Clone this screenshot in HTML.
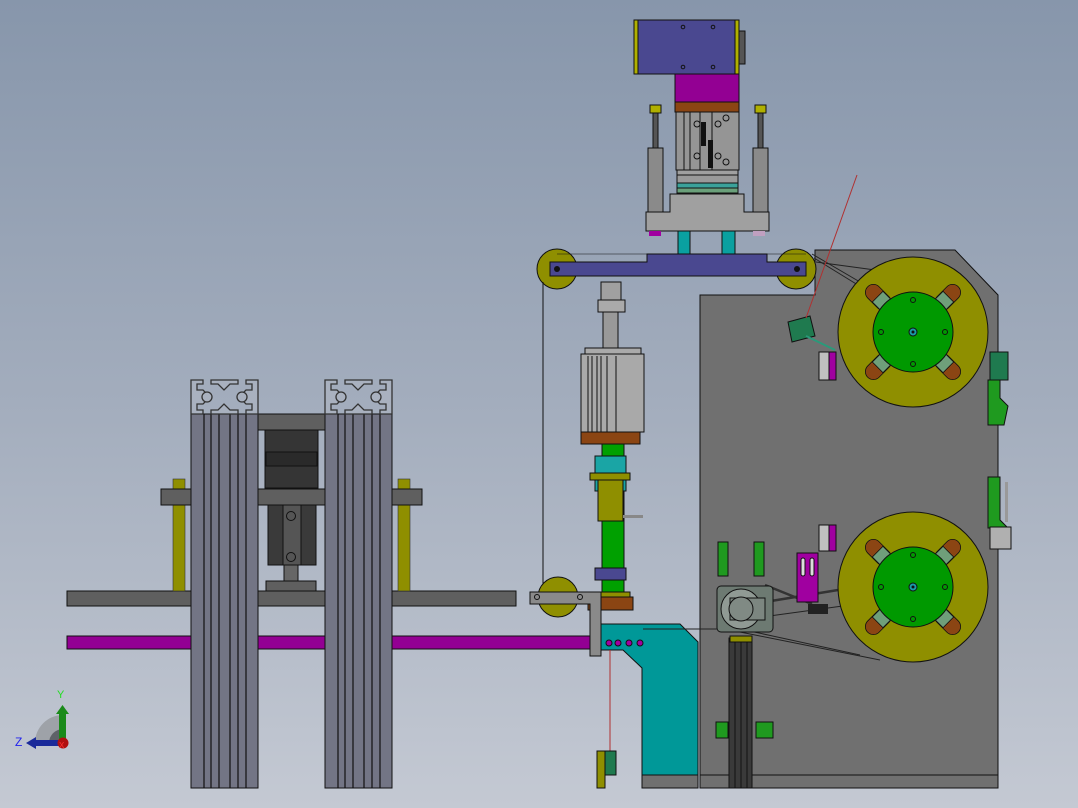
<!DOCTYPE html>
<html><head><meta charset="utf-8"><style>
html,body{margin:0;padding:0;width:1078px;height:808px;overflow:hidden}
svg{display:block}
</style></head><body>
<svg width="1078" height="808" viewBox="0 0 1078 808" xmlns="http://www.w3.org/2000/svg" font-family="Liberation Sans, sans-serif">
<defs>
<linearGradient id="bg" x1="0" y1="0" x2="0" y2="1">
<stop offset="0" stop-color="#8796ab"/><stop offset="0.5" stop-color="#a3adbd"/><stop offset="1" stop-color="#c4c9d3"/>
</linearGradient>
<g id="slot"><rect x="-64" y="-8" width="30" height="16" rx="8" fill="#8b4513"/><rect x="-50" y="-7.5" width="13" height="15" fill="#6f9f7a"/></g>
<g id="reel">
<circle r="75" fill="#8f8f00" stroke="#111" stroke-width="1"/>
<g stroke="#111" stroke-width="0.8">
<use href="#slot" transform="rotate(45)"/><use href="#slot" transform="rotate(135)"/><use href="#slot" transform="rotate(225)"/><use href="#slot" transform="rotate(315)"/>
</g>
<circle r="40" fill="#009900" stroke="#111"/>
<circle r="4" fill="#1a9aa8" stroke="#111"/><circle r="1.5" fill="#111"/>
<circle cx="0" cy="-32" r="2.5" fill="none" stroke="#111"/><circle cx="0" cy="32" r="2.5" fill="none" stroke="#111"/>
<circle cx="-32" cy="0" r="2.5" fill="none" stroke="#111"/><circle cx="32" cy="0" r="2.5" fill="none" stroke="#111"/>
</g>
<g id="prof">
<rect x="0" y="34" width="67" height="374" fill="#737585" stroke="#111"/>
<g stroke="#111" stroke-width="1.2">
<line x1="13" y1="34" x2="13" y2="408"/><line x1="20" y1="34" x2="20" y2="408"/><line x1="28" y1="34" x2="28" y2="408"/>
<line x1="39" y1="34" x2="39" y2="408"/><line x1="47" y1="34" x2="47" y2="408"/><line x1="55" y1="34" x2="55" y2="408"/>
</g>
<g fill="#a9b1bf" stroke="#333" stroke-width="1.3">
<path d="M0 0h12v4h-6v6h6l4 4v6l-4 4h-6v6h6v4H0z"/>
<path d="M67 0h-12v4h6v6h-6l-4 4v6l4 4h6v6h-6v4h12z"/>
<path d="M20 0h27v4h-8l-6 6-6-6h-7z"/>
<path d="M20 34h27v-4h-8l-6-6-6 6h-7z"/>
<circle cx="16" cy="17" r="5"/><circle cx="51" cy="17" r="5"/>
</g>
</g>
</defs>
<rect width="1078" height="808" fill="url(#bg)"/>

<!-- LEFT STRUCTURE -->
<rect x="67" y="591" width="449" height="15" fill="#5f5f5f" stroke="#111"/>
<rect x="67" y="636" width="525" height="13" fill="#930093" stroke="#111"/>
<rect x="173" y="479" width="12" height="112" fill="#8f8f00" stroke="#333" stroke-width=".6"/>
<rect x="398" y="479" width="12" height="112" fill="#8f8f00" stroke="#333" stroke-width=".6"/>
<rect x="161" y="489" width="261" height="16" fill="#5f5f5f" stroke="#111"/>
<rect x="258" y="414" width="67" height="16" fill="#5f5f5f" stroke="#111"/>
<rect x="265" y="430" width="53" height="58" fill="#353535" stroke="#111"/>
<rect x="266" y="452" width="51" height="14" fill="#2a2a2a" stroke="#111"/>
<rect x="268" y="505" width="48" height="60" fill="#3a3a3a" stroke="#111"/>
<rect x="283" y="505" width="18" height="60" fill="#555" stroke="#111"/>
<circle cx="291" cy="516" r="4.5" fill="none" stroke="#111"/><circle cx="291" cy="557" r="4.5" fill="none" stroke="#111"/>
<rect x="284" y="565" width="14" height="18" fill="#666" stroke="#111"/>
<rect x="266" y="581" width="50" height="10" fill="#5f5f5f" stroke="#111"/>
<g transform="translate(191,380)"><use href="#prof"/></g>
<g transform="translate(325,380)"><use href="#prof"/></g>

<!-- axis -->
<path d="M63 743 L35 743 A28 28 0 0 1 63 715 Z" fill="#9ea2a8"/>
<path d="M63 743 L49 743 A14 14 0 0 1 63 729 Z" fill="#5e6268"/>
<rect x="59" y="712" width="7" height="31" fill="#1a8a1a"/><path d="M56 714 L62.5 705 L69 714 Z" fill="#1a8a1a"/>
<rect x="35" y="740" width="28" height="6" fill="#1a2a9a"/><path d="M36 737 L26 743 L36 749 Z" fill="#1a2a9a"/>
<circle cx="63" cy="743" r="5.5" fill="#b01010"/>
<text x="57" y="698" font-size="11" fill="#22dd22">Y</text>
<text x="15" y="746" font-size="12" fill="#2222ee">Z</text>
<text x="59" y="748" font-size="8" fill="#ff3333">X</text>

<!-- BIG PANEL -->
<path d="M700 295 L700 788 L998 788 L998 295 L955 250 L815 250 L815 295 Z" fill="#707070" stroke="#111"/>
<line x1="700" y1="775" x2="998" y2="775" stroke="#111"/>
<g stroke="#222" stroke-width="1">
<line x1="812" y1="254" x2="860" y2="282"/><line x1="814" y1="258" x2="866" y2="290"/><line x1="816" y1="262" x2="890" y2="272"/>
<line x1="740" y1="620" x2="850" y2="605"/><line x1="745" y1="630" x2="860" y2="655"/><line x1="740" y1="632" x2="880" y2="660"/>
</g>
<g stroke="#333" stroke-width="2.5"><line x1="765" y1="602" x2="838" y2="590"/><line x1="765" y1="585" x2="812" y2="604"/></g>
<use href="#reel" x="913" y="332"/>
<use href="#reel" x="913" y="587"/>
<rect x="819" y="352" width="10" height="28" fill="#c0c0c0" stroke="#111"/><rect x="829" y="352" width="7" height="28" fill="#a000a0" stroke="#111"/>
<rect x="819" y="525" width="10" height="26" fill="#c0c0c0" stroke="#111"/><rect x="829" y="525" width="7" height="26" fill="#a000a0" stroke="#111"/>
<rect x="797" y="553" width="21" height="49" fill="#a000a0" stroke="#111"/>
<rect x="801" y="558" width="4" height="18" rx="2" fill="#ddd" stroke="#111"/><rect x="810" y="558" width="4" height="18" rx="2" fill="#ddd" stroke="#111"/>
<rect x="808" y="604" width="20" height="10" fill="#222"/>
<path d="M988 380 L1000 380 L1000 398 L1008 406 L1004 425 L988 425 Z" fill="#1f9a1f" stroke="#111"/>
<rect x="990" y="352" width="18" height="28" fill="#1f7a4f" stroke="#111"/>
<path d="M988 477 L1000 477 L1000 520 L1008 528 L988 528 Z" fill="#1f9a1f" stroke="#111"/>
<rect x="990" y="527" width="21" height="22" fill="#b0b0b0" stroke="#111"/>
<rect x="1005" y="482" width="3" height="40" fill="#999"/>
<rect x="718" y="542" width="10" height="34" fill="#1f9a1f" stroke="#111"/><rect x="754" y="542" width="10" height="34" fill="#1f9a1f" stroke="#111"/>
<rect x="716" y="722" width="12" height="16" fill="#1f9a1f" stroke="#111"/><rect x="756" y="722" width="17" height="16" fill="#1f9a1f" stroke="#111"/>
<rect x="729" y="638" width="23" height="150" fill="#3a3a3a" stroke="#111"/>
<g stroke="#111"><line x1="735" y1="640" x2="735" y2="788"/><line x1="741" y1="640" x2="741" y2="788"/><line x1="747" y1="640" x2="747" y2="788"/></g>
<path d="M730 636 L752 636 L752 642 L730 642 Z" fill="#8f8f00" stroke="#111"/>
<rect x="717" y="586" width="56" height="46" rx="4" fill="#6d7a72" stroke="#111"/>
<circle cx="741" cy="609" r="20" fill="#909a94" stroke="#111"/>
<path d="M730 598 L765 598 L765 620 L730 620 Z" fill="#7c8680" stroke="#111"/>
<circle cx="741" cy="609" r="12" fill="#808a84" stroke="#111"/>
<path d="M788 322 L810 316 L815 336 L792 342 Z" fill="#1f7a4f" stroke="#111"/>
<line x1="806" y1="336" x2="835" y2="350" stroke="#2a9a7a" stroke-width="2"/>
<line x1="857" y1="175" x2="806" y2="318" stroke="#b03030" stroke-width="1"/>

<!-- TOP HEAD -->
<rect x="634" y="20" width="105" height="54" fill="#4a4890" stroke="#111"/>
<rect x="634" y="20" width="4" height="54" fill="#b0b000" stroke="#111"/><rect x="735" y="20" width="4" height="54" fill="#b0b000" stroke="#111"/>
<rect x="739" y="31" width="6" height="33" fill="#555" stroke="#111"/>
<g fill="none" stroke="#111"><circle cx="683" cy="27" r="1.8"/><circle cx="713" cy="27" r="1.8"/><circle cx="683" cy="67" r="1.8"/><circle cx="713" cy="67" r="1.8"/></g>
<rect x="675" y="74" width="64" height="28" fill="#930093" stroke="#111"/>
<rect x="675" y="102" width="64" height="10" fill="#8b4513" stroke="#111"/>
<rect x="676" y="112" width="63" height="58" fill="#959595" stroke="#111"/>
<g stroke="#111"><line x1="684" y1="112" x2="684" y2="170"/><line x1="690" y1="112" x2="690" y2="170"/><line x1="700" y1="112" x2="700" y2="170"/><line x1="712" y1="112" x2="712" y2="170"/></g>
<rect x="701" y="122" width="5" height="24" fill="#111"/><rect x="708" y="140" width="5" height="28" fill="#111"/>
<g fill="none" stroke="#111"><circle cx="697" cy="124" r="3"/><circle cx="718" cy="124" r="3"/><circle cx="697" cy="156" r="3"/><circle cx="718" cy="156" r="3"/><circle cx="726" cy="118" r="3"/><circle cx="726" cy="162" r="3"/></g>
<rect x="677" y="175" width="61" height="8" fill="#9a9a9a" stroke="#111"/>
<rect x="677" y="183" width="61" height="5" fill="#3aa29a" stroke="#111"/>
<rect x="677" y="188" width="61" height="5" fill="#6aa07a" stroke="#111"/>
<rect x="677" y="170" width="61" height="5" fill="#a0a0a0" stroke="#111"/>
<g fill="#909090" stroke="#111">
<rect x="650" y="105" width="11" height="8" fill="#b0b000"/><rect x="653" y="113" width="5" height="36" fill="#555"/>
<rect x="648" y="148" width="15" height="65" fill="#8a8a8a"/>
<rect x="755" y="105" width="11" height="8" fill="#b0b000"/><rect x="758" y="113" width="5" height="36" fill="#555"/>
<rect x="753" y="148" width="15" height="65" fill="#8a8a8a"/>
</g>
<path d="M670 194 L744 194 L744 212 L769 212 L769 231 L646 231 L646 212 L670 212 Z" fill="#a0a0a0" stroke="#111"/>
<rect x="649" y="231" width="12" height="5" fill="#a000a0"/><rect x="753" y="231" width="12" height="5" fill="#c0a0c0"/>
<rect x="678" y="231" width="12" height="24" fill="#0aa0a0" stroke="#111"/>
<rect x="722" y="231" width="13" height="24" fill="#0aa0a0" stroke="#111"/>
<circle cx="557" cy="269" r="20" fill="#8f8f00" stroke="#111"/>
<circle cx="796" cy="269" r="20" fill="#8f8f00" stroke="#111"/>
<path d="M550 262 L647 262 L647 254 L767 254 L767 262 L806 262 L806 276 L550 276 Z" fill="#4a4890" stroke="#111"/>
<line x1="557" y1="254" x2="806" y2="254" stroke="#111" stroke-width=".6"/>
<circle cx="557" cy="269" r="3" fill="#111"/><circle cx="797" cy="269" r="3" fill="#111"/>
<line x1="543" y1="282" x2="543" y2="590" stroke="#111"/>

<!-- VERTICAL ASSEMBLY -->
<rect x="601" y="282" width="20" height="18" fill="#a0a0a0" stroke="#111"/>
<rect x="598" y="300" width="27" height="12" fill="#aaa" stroke="#111"/>
<rect x="603" y="312" width="15" height="38" fill="#999" stroke="#111"/>
<rect x="585" y="348" width="56" height="6" fill="#aaa" stroke="#111"/>
<rect x="581" y="354" width="63" height="78" fill="#a9a9a9" stroke="#111"/>
<g stroke="#111"><line x1="588" y1="356" x2="588" y2="432"/><line x1="592" y1="356" x2="592" y2="432"/><line x1="597" y1="356" x2="597" y2="432"/><line x1="601" y1="356" x2="601" y2="432"/><line x1="607" y1="356" x2="607" y2="432"/><line x1="616" y1="356" x2="616" y2="432"/></g>
<rect x="581" y="432" width="59" height="12" fill="#8b4513" stroke="#111"/>
<rect x="602" y="444" width="22" height="165" fill="#00a000" stroke="#111"/>
<rect x="595" y="456" width="31" height="35" fill="#1aa5a5" stroke="#111"/>
<rect x="590" y="473" width="40" height="7" fill="#8f8f00" stroke="#111"/>
<rect x="598" y="480" width="25" height="41" fill="#8f8f00" stroke="#111"/>
<rect x="623" y="515" width="20" height="3" fill="#888"/>
<rect x="595" y="568" width="31" height="12" fill="#4a4890" stroke="#111"/>
<rect x="600" y="592" width="30" height="5" fill="#8f8f00" stroke="#111"/>
<rect x="588" y="597" width="45" height="13" fill="#8b4513" stroke="#111"/>
<circle cx="558" cy="597" r="20" fill="#8f8f00" stroke="#111"/>
<path d="M530 592 L601 592 L601 656 L590 656 L590 604 L530 604 Z" fill="#8a8a8a" stroke="#111"/>
<circle cx="537" cy="597" r="2.5" fill="none" stroke="#111"/><circle cx="580" cy="597" r="2.5" fill="none" stroke="#111"/>
<path d="M601 624 L680 624 L698 642 L698 775 L642 775 L642 668 L623 650 L601 650 Z" fill="#009898" stroke="#111"/>
<rect x="642" y="775" width="56" height="13" fill="#707070" stroke="#111"/>
<g fill="#a000a0" stroke="#111"><circle cx="609" cy="643" r="3"/><circle cx="618" cy="643" r="3"/><circle cx="629" cy="643" r="3"/><circle cx="640" cy="643" r="3"/></g>
<line x1="643" y1="629" x2="717" y2="629" stroke="#222"/>
<line x1="610" y1="650" x2="610" y2="752" stroke="#b03030"/>
<rect x="597" y="751" width="8" height="37" fill="#8f8f00" stroke="#111"/>
<rect x="605" y="751" width="11" height="24" fill="#1f7a4f" stroke="#111"/>
</svg>
</body></html>
